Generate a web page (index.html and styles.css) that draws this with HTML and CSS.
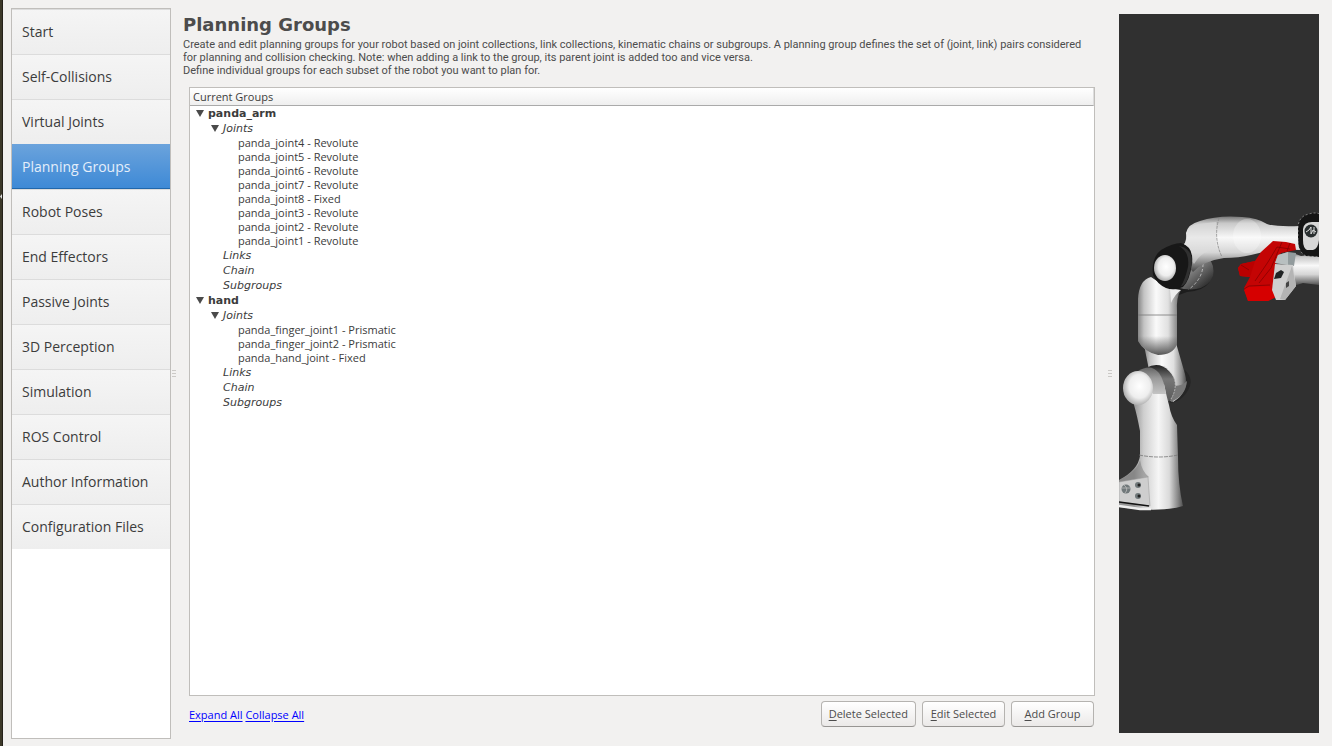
FILE: index.html
```html
<!DOCTYPE html>
<html lang="en">
<head>
<meta charset="utf-8">
<title>Planning Groups</title>
<link rel="stylesheet" href="styles.css">
</head>
<body>
<div class="app">
  <div class="desktop-edge"><svg width="3" height="5" viewBox="0 0 3 5"><path d="M0 2.500 2 0v5z" fill="#ddd"/></svg></div>

  <nav class="sidebar">
    <button class="nav-item">Start</button>
    <button class="nav-item">Self-Collisions</button>
    <button class="nav-item">Virtual Joints</button>
    <button class="nav-item active" aria-current="page">Planning Groups</button>
    <button class="nav-item">Robot Poses</button>
    <button class="nav-item">End Effectors</button>
    <button class="nav-item">Passive Joints</button>
    <button class="nav-item">3D Perception</button>
    <button class="nav-item">Simulation</button>
    <button class="nav-item">ROS Control</button>
    <button class="nav-item">Author Information</button>
    <button class="nav-item">Configuration Files</button>
  </nav>

  <div class="splitter"><span class="grip"></span></div>

  <main class="content">
    <h1 class="title">Planning Groups</h1>
    <p class="intro">Create and edit planning groups for your robot based on joint collections, link collections, kinematic chains or subgroups. A planning group defines the set of (joint, link) pairs considered<br>for planning and collision checking. Note: when adding a link to the group, its parent joint is added too and vice versa.<br>Define individual groups for each subset of the robot you want to plan for.</p>

    <section class="tree">
      <div class="tree-head">Current Groups</div>
      <ul class="groups">
        <li><span class="row group"><i class="arrow"></i>panda_arm</span>
          <ul>
            <li><span class="row kind"><i class="arrow"></i>Joints</span>
              <ul>
                <li class="leaf">panda_joint4 - Revolute</li>
                <li class="leaf">panda_joint5 - Revolute</li>
                <li class="leaf">panda_joint6 - Revolute</li>
                <li class="leaf">panda_joint7 - Revolute</li>
                <li class="leaf">panda_joint8 - Fixed</li>
                <li class="leaf">panda_joint3 - Revolute</li>
                <li class="leaf">panda_joint2 - Revolute</li>
                <li class="leaf">panda_joint1 - Revolute</li>
              </ul>
            </li>
            <li class="row kind">Links</li>
            <li class="row kind">Chain</li>
            <li class="row kind">Subgroups</li>
          </ul>
        </li>
        <li><span class="row group"><i class="arrow"></i>hand</span>
          <ul>
            <li><span class="row kind"><i class="arrow"></i>Joints</span>
              <ul>
                <li class="leaf">panda_finger_joint1 - Prismatic</li>
                <li class="leaf">panda_finger_joint2 - Prismatic</li>
                <li class="leaf">panda_hand_joint - Fixed</li>
              </ul>
            </li>
            <li class="row kind">Links</li>
            <li class="row kind">Chain</li>
            <li class="row kind">Subgroups</li>
          </ul>
        </li>
      </ul>
    </section>

    <footer class="actions">
      <div class="links"><a href="#expand">Expand All</a> <a href="#collapse">Collapse All</a></div>
      <button class="btn"><u>D</u>elete Selected</button>
      <button class="btn"><u>E</u>dit Selected</button>
      <button class="btn"><u>A</u>dd Group</button>
    </footer>
  </main>

  <div class="splitter right"><span class="grip"></span></div>

  <aside class="viewer">
    <svg class="robot" viewBox="1119 14 200 719" role="img" aria-label="Robot model">
      <defs>
        <linearGradient id="column" x1="0" x2="1" y1="0" y2="0">
          <stop offset="0" stop-color="#858585"/><stop offset=".14" stop-color="#c4c4c4"/><stop offset=".42" stop-color="#fafafa"/><stop offset=".7" stop-color="#e0e0e0"/><stop offset=".9" stop-color="#8b8b8b"/><stop offset="1" stop-color="#505050"/>
        </linearGradient>
        <linearGradient id="base" gradientUnits="userSpaceOnUse" x1="1134" x2="1183" y1="0" y2="0">
          <stop offset="0" stop-color="#969696"/><stop offset=".2" stop-color="#cfcfcf"/><stop offset=".5" stop-color="#f6f6f6"/><stop offset=".72" stop-color="#dadada"/><stop offset=".9" stop-color="#858585"/><stop offset="1" stop-color="#505050"/>
        </linearGradient>
        <linearGradient id="arm" x1="0" x2="0" y1="0" y2="1">
          <stop offset="0" stop-color="#777"/><stop offset=".12" stop-color="#c8c8c8"/><stop offset=".38" stop-color="#f8f8f8"/><stop offset=".65" stop-color="#d5d5d5"/><stop offset=".88" stop-color="#777"/><stop offset="1" stop-color="#444"/>
        </linearGradient>
        <radialGradient id="ball" cx=".55" cy=".45" r=".58">
          <stop offset="0" stop-color="#fff"/><stop offset=".6" stop-color="#eee"/><stop offset="1" stop-color="#a8a8a8"/>
        </radialGradient>
        <linearGradient id="drum" x1="0" x2="1" y1="0" y2="1">
          <stop offset="0" stop-color="#ddd"/><stop offset=".45" stop-color="#777"/><stop offset="1" stop-color="#111"/>
        </linearGradient>
        <linearGradient id="shade" x1="0" x2="0" y1="0" y2="1">
          <stop offset="0" stop-color="#222"/><stop offset=".35" stop-color="#777"/><stop offset="1" stop-color="#555"/>
        </linearGradient>
        <linearGradient id="chin" gradientUnits="userSpaceOnUse" x1="0" x2="0" y1="336" y2="355">
          <stop offset="0" stop-color="#555" stop-opacity="0"/><stop offset="1" stop-color="#555"/>
        </linearGradient>
        <linearGradient id="band" x1="0" x2="0" y1="0" y2="1">
          <stop offset="0" stop-color="#666"/><stop offset=".4" stop-color="#9a9a9a"/><stop offset="1" stop-color="#c4c4c4"/>
        </linearGradient>
      </defs>

      <path fill="url(#drum)" d="M1190 262 1209 259Q1215 265 1213 276 1208 288 1195 290L1176 290z"/>
      <path d="M1203 264Q1203 279 1188 290" fill="none" stroke="#ddd" stroke-dasharray="3 2" stroke-width=".7"/>
      <path fill="#1d1d1d" d="M1176 287Q1198 294 1210 282 1203 291 1187 292L1176 296z"/>

      <path fill="#262626" d="M1185 370Q1193 378 1190 386 1184 401 1170 403z"/>
      <path fill="url(#column)" d="M1144 345Q1158 355 1176 343L1185 374Q1190 392 1173 402L1149 370z"/>
      <path fill="#777" d="M1168 385Q1180 388 1187 381 1186 395 1171 402z"/>
      <path fill="url(#column)" d="M1138 299Q1139 280 1151 277L1166 287 1181 290Q1176 297 1177 312V344Q1173 355 1158 355 1144 352 1138 341z"/>
      <path fill="url(#chin)" d="M1138 336H1177V344Q1173 355 1158 355 1144 352 1138 341z"/>
      <path fill="#eee" d="M1170 289 1181 290Q1175 294 1171 303z"/>
      <path d="M1138 315H1177" stroke="#777" stroke-width=".8"/>

      <path fill="url(#shade)" d="M1146 368Q1159 361 1169 371 1182 384 1169 401L1160 405z"/>
      <path d="M1164 366Q1183 380 1170 401" fill="none" stroke="#ccc" stroke-dasharray="2 1" stroke-width=".7"/>
      <path fill="url(#base)" d="M1134 400 1153 384 1164 384Q1167 398 1169 405 1171 417 1177 425L1178 457Q1178 485 1183 506 1160 513 1119 507V480Q1138 470 1140 456V431Q1137 415 1134 405z"/>
      <path fill="url(#band)" d="M1138 371Q1151 363 1159 373 1164 380 1166 394L1153 394z"/>
      <ellipse cx="1138" cy="388" rx="15" ry="17" fill="url(#ball)"/>
      <path d="M1139 455Q1159 459 1178 455" fill="none" stroke="#777" stroke-width=".8" stroke-dasharray="4 1"/>
      <path fill="#777" opacity=".5" d="M1119 480Q1137 472 1140 460 1142 472 1149 477L1119 483z"/>
      <path fill="#cecece" stroke="#999" stroke-width=".5" d="M1119 482 1148 477 1150 506 1119 502z"/>
      <path fill="none" stroke="#111" stroke-width="1.500" d="M1119 502 1149 506"/>
      <path fill="none" stroke="#eee" stroke-width="2.500" d="M1119 506 1140 509H1151"/>
      <circle cx="1126" cy="489" r="4.500" fill="#70787a"/><path d="M1122 488H1130M1124 485Q1129 489 1125 493" stroke="#bbb" fill="none" stroke-width=".8"/>
      <circle cx="1138" cy="485" r="3" fill="#70787a"/><circle cx="1139" cy="485" r="1.500" fill="#222"/>
      <circle cx="1138" cy="496" r="3" fill="#70787a"/><circle cx="1139" cy="496" r="1.500" fill="#222"/>

      <path fill="url(#arm)" d="M1184 244Q1187 241 1186 233 1188 224 1200 221 1218 215 1242 217 1258 218 1267 224 1275 227 1300 226V250Q1275 249 1251 255 1239 258 1224 258 1203 261 1193 272 1186 265 1184 250z"/>
      <path fill="#ddd" opacity=".55" d="M1187 233Q1189 226 1198 224L1216 222V249Q1201 251 1194 264L1184 249z"/>
      <ellipse cx="1247" cy="236" rx="14" ry="17" fill="#fff" opacity=".28"/>
      <path d="M1219 218Q1213 238 1222 257" fill="none" stroke="#888" stroke-dasharray="3 1" stroke-width=".8"/>
      <path fill="#171717" d="M1161 250Q1173 243 1181 243 1194 247 1192 263 1190 280 1183 287 1174 291 1166 288 1157 284 1153 275 1151 258 1161 250z"/>
      <path fill="#303030" d="M1179 246Q1190 252 1188 267 1185 280 1181 286 1187 286 1191 267 1195 249 1179 246z"/>
      <ellipse cx="1165" cy="268" rx="11" ry="13" fill="url(#ball)"/>

      <path fill="url(#arm)" d="M1293 253 1301 256 1319 254V285L1303 283 1293 286z"/>
      <path fill="#c40404" d="M1273 241 1286 242 1295 244 1296 250 1281 253 1275 267 1273 283 1276 297 1268 301 1248 301 1244 288 1250 277 1240 276 1238 268 1241 264 1255 261 1261 252z"/>
      <path fill="#b00" d="M1238 268 1241 264 1255 261 1250 277 1240 276z"/>
      <path fill="#d60000" d="M1244 290 1249 287 1269 286 1274 291 1276 297 1268 301 1248 301z"/>
      <path fill="none" stroke="#7c0000" stroke-width=".7" d="M1255 281 1268 262 1277 247 1290 249M1244 289 1249 286 1270 285M1241 265 1249 270M1282 242 1271 268 1259 283M1290 243 1287 251"/>
      <path fill="#929b9d" d="M1278 255 1288 252 1296 253 1294 266 1275 263z"/>
      <path fill="#b8bfc0" d="M1278 255 1288 252V265L1275 263z"/>
      <path fill="#cfcfcf" d="M1275 264 1293 265 1296 286 1285 300 1276 300 1272 290z"/>
      <path fill="#b4b4b4" d="M1292 266 1296 286 1285 300 1280 299z"/>
      <path fill="#202324" d="M1276 273 1281 270 1284 272 1281 278 1274 279z"/>
      <path fill="#444" d="M1286 283 1289 281V286L1286 288z"/>
      <path fill="#151515" stroke="#ddd" stroke-width=".5" stroke-dasharray="2 2" d="M1298 240V227Q1299 216 1309 214 1315 212 1320 214V257L1306 256Q1298 252 1298 240z"/>
      <path fill="#d7d7d7" d="M1303 229Q1304 222 1312 222H1319V240Q1318 249 1313 250H1307Q1303 248 1303 240z"/>
      <circle cx="1311" cy="231" r="6.500" fill="#292e2f"/><path d="M1306 232 1309 230 1311 227V234L1313 230 1316 232M1314 227V234" fill="none" stroke="#ddd" stroke-width="1"/>
    </svg>
  </aside>
</div>
</body>
</html>
```
FILE: styles.css
```css
* { box-sizing: border-box; }
body {
  margin: 0;
  background: #f2f1f0;
  color: #4c4c4c;
  font: 11px/13px "Open Sans", "Noto Sans", sans-serif;
}
button { font: inherit; color: inherit; }
.app { display: flex; min-height: 100vh; }

.desktop-edge {
  width: 3px;
  background: #3c3829;
  border-right: 1px solid #24211a;
  padding-top: 194px;
  overflow: hidden;
}
.desktop-edge svg { display: block; }

.sidebar {
  width: 160px;
  margin: 8px 0 7px 8px;
  border: 1px solid #c0bebb;
  background: #fff;
  flex: none;
}
.nav-item {
  display: block;
  width: 100%;
  height: 45px;
  padding: 0 10px;
  border: 0;
  background: linear-gradient(#f5f5f5, #eee);
  box-shadow: inset 0 1px #dcdcdc;
  font-size: 14px;
  text-align: left;
  color: #3c3c3c;
}
.nav-item.active {
  background: linear-gradient(#6ba3dc, #3d89d6);
  box-shadow: inset 0 -1px #2167ab;
  color: #e4eefa;
}

.splitter {
  display: flex;
  align-items: center;
  width: 12px;
  padding-left: 1px;
  flex: none;
}
.splitter.right { width: 19px; padding-left: 8px; }
.grip {
  width: 4px;
  height: 7px;
  background: repeating-linear-gradient(#cbc9c6 0 1px, transparent 1px 3px);
}

.content {
  flex: 1;
  min-width: 0;
  display: flex;
  flex-direction: column;
  padding: 14px 0 19px;
}
.title {
  margin: 0;
  font: bold 18px/22px "DejaVu Sans", sans-serif;
}
.intro {
  margin: 2px 0 10px;
  font-family: Roboto, "Open Sans", sans-serif;
  white-space: nowrap;
}

.tree {
  flex: 1;
  margin: 0 5px 5px 6px;
  border: 1px solid #c0bebb;
  background: #fff;
  color: #3c3c3c;
}
.tree-head {
  height: 18px;
  padding: 0 3px;
  line-height: 18px;
  background: linear-gradient(#fff, #efefef);
  border-bottom: 1px solid #aaa;
  border-right: 1px solid #ddd;
}
.tree ul { margin: 0; padding: 0 0 0 15px; list-style: none; }
.tree .groups { padding-left: 18px; }
.row {
  position: relative;
  display: block;
  font: 11px/15px "DejaVu Sans", sans-serif;
}
.group { font-weight: bold; }
.kind { font-style: italic; }
.arrow {
  position: absolute;
  left: -12px;
  top: 4px;
  border: 4px solid transparent;
  border-top: 7px solid #4a4a4a;
  border-bottom: 0;
}
.leaf { line-height: 14px; }

.actions { display: flex; gap: 6px; align-items: center; padding: 0 6px; }
.links { margin-right: auto; }
.links a { color: #00f; text-underline-offset: 2px; }
.btn {
  height: 26px;
  min-width: 83px;
  padding: 0 7px 2px;
  border: 1px solid #b5b3b0;
  border-bottom-color: #979593;
  border-radius: 4px;
  background: linear-gradient(#fff, #ebe9e8);
}
.btn u { text-underline-offset: 2px; }

.viewer {
  width: 200px;
  margin: 14px 13px 13px 0;
  background: #303030;
  flex: none;
  display: flex;
  align-items: center;
}
.robot { display: block; width: 100%; }
```
